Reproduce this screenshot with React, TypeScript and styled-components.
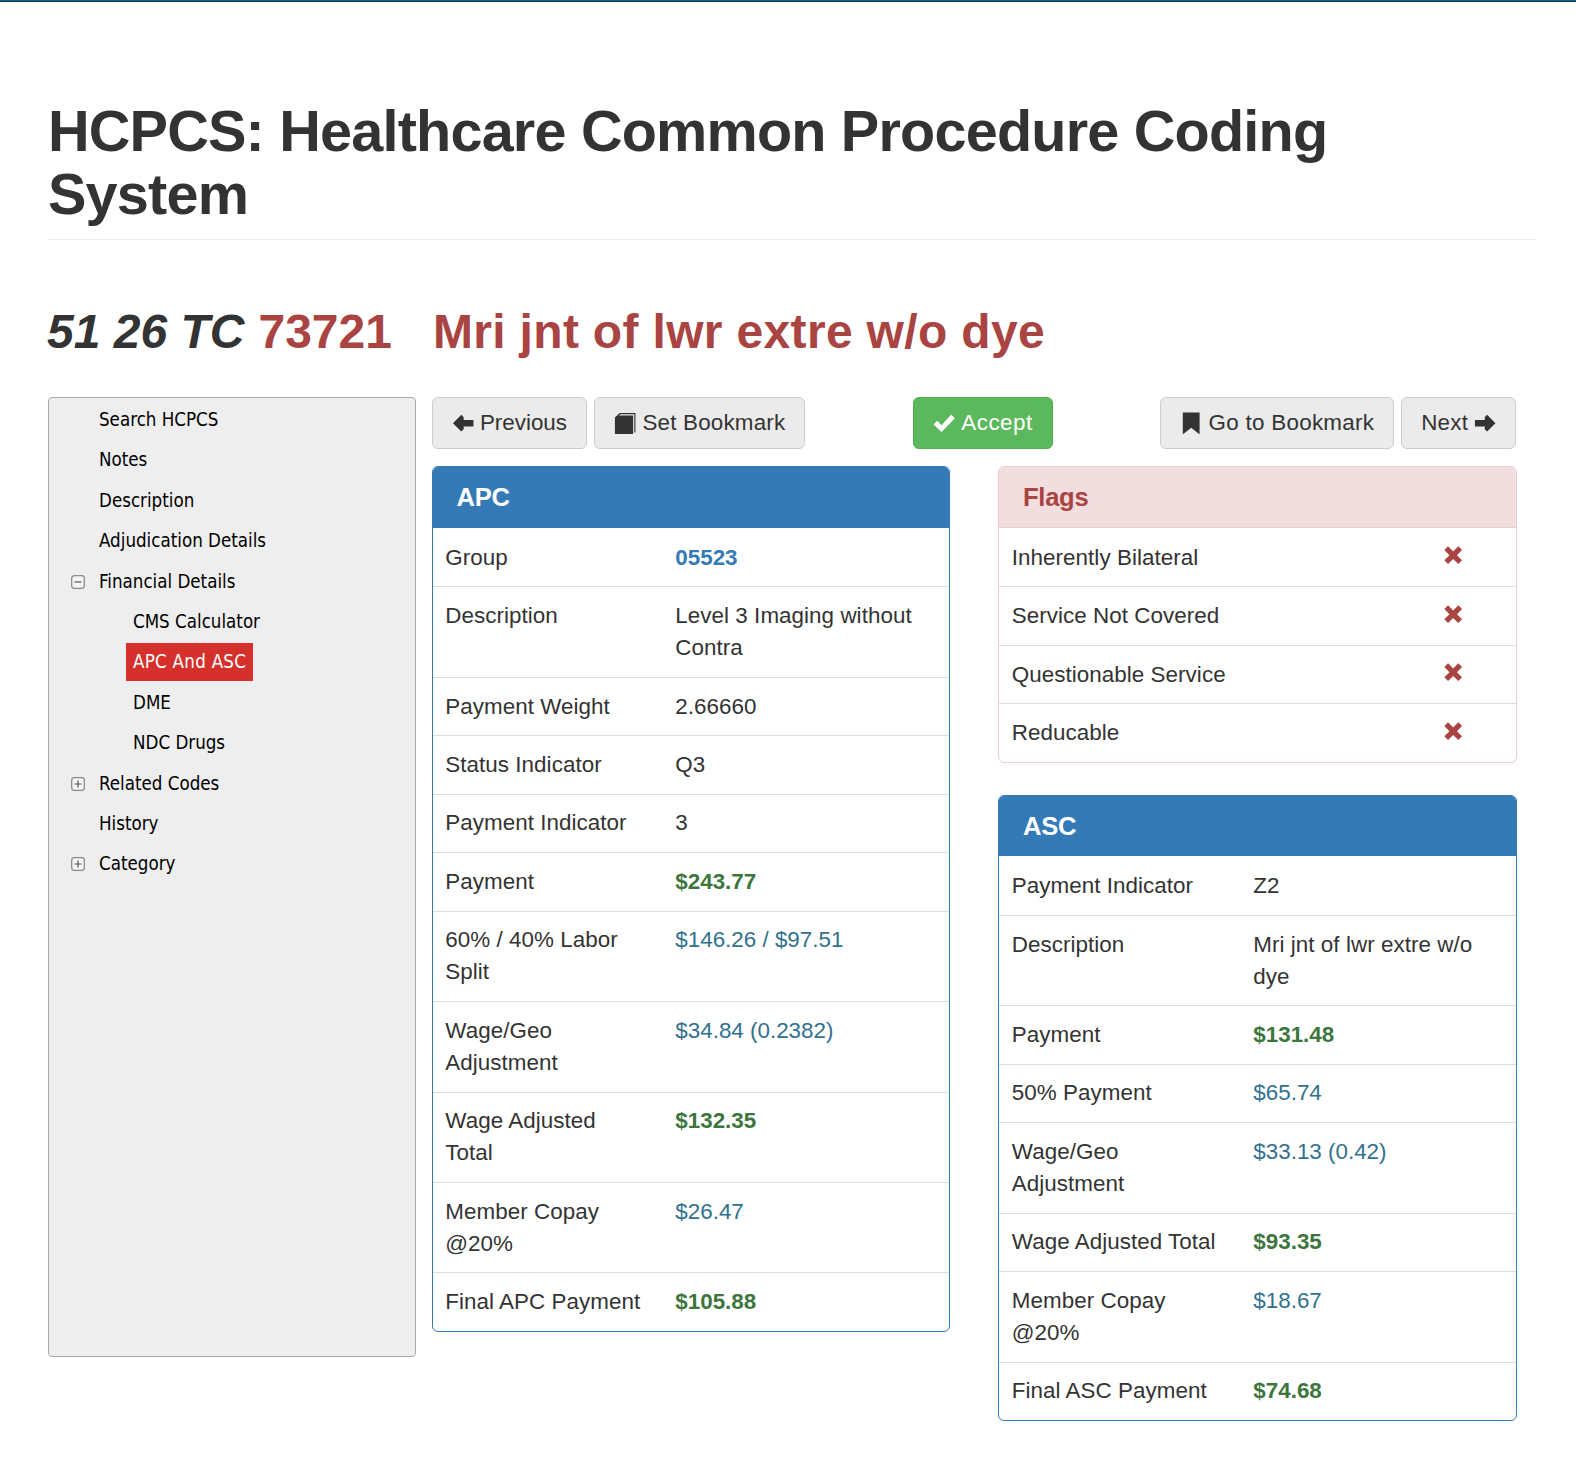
import React from "react";
import styled, { createGlobalStyle } from "styled-components";

const GlobalStyle = createGlobalStyle`
  html, body {
    margin: 0;
    padding: 0;
    background: #fff;
  }
  body {
    font-family: "Liberation Sans", Arial, sans-serif;
    font-size: 22.4px;
    line-height: 32px;
    color: #333;
  }
`;

type Tone = "plain" | "link" | "money" | "info";

type Row = { label: string; value: string; tone?: Tone };

const apcRows: Row[] = [
  { label: "Group", value: "05523", tone: "link" },
  { label: "Description", value: "Level 3 Imaging without Contra" },
  { label: "Payment Weight", value: "2.66660" },
  { label: "Status Indicator", value: "Q3" },
  { label: "Payment Indicator", value: "3" },
  { label: "Payment", value: "$243.77", tone: "money" },
  { label: "60% / 40% Labor Split", value: "$146.26 / $97.51", tone: "info" },
  { label: "Wage/Geo Adjustment", value: "$34.84 (0.2382)", tone: "info" },
  { label: "Wage Adjusted Total", value: "$132.35", tone: "money" },
  { label: "Member Copay @20%", value: "$26.47", tone: "info" },
  { label: "Final APC Payment", value: "$105.88", tone: "money" },
];

const ascRows: Row[] = [
  { label: "Payment Indicator", value: "Z2" },
  { label: "Description", value: "Mri jnt of lwr extre w/o dye" },
  { label: "Payment", value: "$131.48", tone: "money" },
  { label: "50% Payment", value: "$65.74", tone: "info" },
  { label: "Wage/Geo Adjustment", value: "$33.13 (0.42)", tone: "info" },
  { label: "Wage Adjusted Total", value: "$93.35", tone: "money" },
  { label: "Member Copay @20%", value: "$18.67", tone: "info" },
  { label: "Final ASC Payment", value: "$74.68", tone: "money" },
];

const flags = [
  "Inherently Bilateral",
  "Service Not Covered",
  "Questionable Service",
  "Reducable",
];

type TreeItem = {
  label: string;
  depth?: 0 | 1;
  toggle?: "open" | "closed";
  active?: boolean;
};

const tree: TreeItem[] = [
  { label: "Search HCPCS" },
  { label: "Notes" },
  { label: "Description" },
  { label: "Adjudication Details" },
  { label: "Financial Details", toggle: "open" },
  { label: "CMS Calculator", depth: 1 },
  { label: "APC And ASC", depth: 1, active: true },
  { label: "DME", depth: 1 },
  { label: "NDC Drugs", depth: 1 },
  { label: "Related Codes", toggle: "closed" },
  { label: "History" },
  { label: "Category", toggle: "closed" },
];

const TopLine = styled.div`
  height: 2px;
  background: #17607f;
  border-bottom: 1px solid #0d3a50;
  box-sizing: border-box;
`;

const Page = styled.div`
  padding: 98px 40px 40px 48px;
`;

const PageHeader = styled.header`
  border-bottom: 1px solid #eee;
  padding-bottom: 12px;
`;

const Title = styled.h1`
  margin: 0;
  font-size: 57.6px;
  line-height: 63.4px;
  font-weight: 700;
  letter-spacing: -0.8px;
  color: #333;
`;

const CodeLine = styled.h2`
  margin: 65px 0 0;
  font-size: 48px;
  line-height: 53px;
  font-weight: 700;
  color: #a94442;
  display: flex;
`;

const Modifiers = styled.em`
  color: #333;
  font-style: italic;
  margin-left: -1px;
  margin-right: 14px;
`;

const CodeName = styled.span`
  margin-left: 41px;
  letter-spacing: 0.33px;
`;

const Layout = styled.div`
  display: grid;
  grid-template-columns: 367.5px 1085px;
  column-gap: 16px;
  align-items: start;
  margin-top: 39px;
`;

const Sidebar = styled.nav`
  box-sizing: border-box;
  height: 960px;
  background: #eee;
  border: 1px solid #aaa;
  border-radius: 4px;
  padding-top: 2px;
  font-family: "DejaVu Sans", sans-serif;
  font-stretch: condensed;
  font-size: 18.6px;
  color: #000;
`;

const TreeRow = styled.div<{ $depth: number }>`
  height: 40.42px;
  display: flex;
  align-items: center;
  padding-left: ${(p) => (p.$depth === 1 ? 77 : 22)}px;
`;

const TreeToggle = styled.span`
  width: 14px;
  height: 14px;
  flex: none;
  color: #777;
  display: flex;
`;

const TreeSpacer = styled.span<{ $depth: number }>`
  width: 14px;
  flex: none;
  display: ${(p) => (p.$depth === 1 ? "none" : "block")};
`;

const TreeLabel = styled.span<{ $active?: boolean; $depth: number }>`
  margin-left: ${(p) => (p.$depth === 1 ? 0 : 7)}px;
  padding: 0 7px;
  height: 38px;
  line-height: 38px;
  letter-spacing: ${(p) => (p.$active ? 0.27 : 0)}px;
  background: ${(p) => (p.$active ? "#d5302c" : "transparent")};
  color: ${(p) => (p.$active ? "#fff" : "#000")};
`;

const Main = styled.div`
  min-width: 0;
`;

const Toolbar = styled.div`
  display: flex;
  justify-content: space-between;
  align-items: center;
  margin-bottom: 17px;
`;

const ButtonGroup = styled.div`
  display: flex;
  gap: 7px;
`;

const Button = styled.button<{ $primary?: boolean; $tracking: number }>`
  box-sizing: border-box;
  height: 52.5px;
  padding: 0 19px;
  display: flex;
  align-items: center;
  gap: 6px;
  font: inherit;
  letter-spacing: ${(p) => p.$tracking}px;
  color: ${(p) => (p.$primary ? "#fff" : "#333")};
  background: ${(p) => (p.$primary ? "#5cb85c" : "#ebebeb")};
  border: 1px solid ${(p) => (p.$primary ? "#4cae4c" : "#ccc")};
  border-radius: 6px;
`;

const Columns = styled.div`
  display: grid;
  grid-template-columns: 518px 518.5px;
  column-gap: 48.5px;
  align-items: start;
`;

const Stack = styled.div`
  display: flex;
  flex-direction: column;
  gap: 32px;
`;

const Panel = styled.section<{ $danger?: boolean }>`
  border: 1px solid ${(p) => (p.$danger ? "#ebccd1" : "#337ab7")};
  border-radius: 6px;
  overflow: hidden;
  background: #fff;
`;

const PanelHeading = styled.h3<{ $danger?: boolean }>`
  margin: 0;
  box-sizing: border-box;
  height: 60.7px;
  padding: 0 24px;
  font-size: 25.6px;
  line-height: 60px;
  font-weight: 700;
  letter-spacing: -0.3px;
  color: ${(p) => (p.$danger ? "#a94442" : "#fff")};
  background: ${(p) => (p.$danger ? "#f2dede" : "#337ab7")};
  border-bottom: 1px solid ${(p) => (p.$danger ? "#ebccd1" : "#337ab7")};
`;

const TableRow = styled.div<{ $labelWidth: number }>`
  display: grid;
  grid-template-columns: ${(p) => p.$labelWidth}px 1fr;
  border-top: 1px solid #ddd;

  ${PanelHeading} + & {
    border-top: 0;
    padding-top: 1px;
  }
`;

const Cell = styled.div`
  padding: 12.72px 15px 12.72px 12.8px;
  letter-spacing: 0.05px;
`;

const toneColor: Record<Tone, string> = {
  plain: "#333",
  link: "#337ab7",
  money: "#3c763d",
  info: "#31708f",
};

const Value = styled(Cell)<{ $tone: Tone }>`
  color: ${(p) => toneColor[p.$tone]};
  font-weight: ${(p) => (p.$tone === "link" || p.$tone === "money" ? 700 : 400)};
  letter-spacing: ${(p) => (p.$tone === "plain" ? 0.05 : 0)}px;
`;

const FlagIcon = styled.span`
  display: block;
  margin-top: 2px;
  height: 24px;
  color: #a94442;
`;

const Glyph = styled.svg`
  width: 1em;
  height: 1em;
  flex: none;
  fill: currentColor;
`;

const ArrowLeft = () => (
  <Glyph viewBox="0 0 24 24">
    <path d="M1 12 10 3 12.5 5.5V8.5H23V15.5H12.5V18.5L10 21Z" />
  </Glyph>
);

const ArrowRight = () => (
  <Glyph viewBox="0 0 24 24">
    <path d="M23 12 14 3 11.5 5.5V8.5H1V15.5H11.5V18.5L14 21Z" />
  </Glyph>
);

const BookIcon = () => (
  <Glyph viewBox="0 0 24 24">
    <path d="M1 6 6 1H23V22H21.8V2.4H7L5.2 3.8H20.5V24H1Z" />
  </Glyph>
);

const BookmarkIcon = () => (
  <Glyph viewBox="0 0 24 24">
    <path d="M3 0.5H21V24L12 17 3 24Z" />
  </Glyph>
);

const CheckIcon = () => (
  <Glyph viewBox="0 0 24 24">
    <path d="M0.5 13.5 4.5 9.5 9.2 14.2 19.5 2.8 23.5 6.8 9.2 21.5Z" />
  </Glyph>
);

const RemoveIcon = () => (
  <Glyph viewBox="0 0 24 24">
    <path d="M6.5 2.5 12 8 17.5 2.5 21.5 6.5 16 12 21.5 17.5 17.5 21.5 12 16 6.5 21.5 2.5 17.5 8 12 2.5 6.5Z" />
  </Glyph>
);

const ToggleIcon = ({ open }: { open: boolean }) => (
  <svg viewBox="0 0 14 14" width="14" height="14">
    <rect x="0.7" y="0.7" width="12.6" height="12.6" rx="2.5" fill="#f4f4f4" stroke="#8a8a8a" strokeWidth="1.3" />
    <path d={open ? "M3.5 7H10.5" : "M3.5 7H10.5M7 3.5V10.5"} stroke="#555" strokeWidth="1.2" fill="none" />
  </svg>
);

const DataPanel = ({
  title,
  rows,
  labelWidth,
}: {
  title: string;
  rows: Row[];
  labelWidth: number;
}) => (
  <Panel>
    <PanelHeading>{title}</PanelHeading>
    {rows.map((row) => (
      <TableRow key={row.label} $labelWidth={labelWidth}>
        <Cell>{row.label}</Cell>
        <Value $tone={row.tone ?? "plain"}>{row.value}</Value>
      </TableRow>
    ))}
  </Panel>
);

function App() {
  return (
    <>
      <GlobalStyle />
      <TopLine />
      <Page>
        <PageHeader>
          <Title>
            HCPCS: Healthcare Common Procedure Coding
            <br />
            System
          </Title>
        </PageHeader>

        <CodeLine>
          <Modifiers>51 26 TC</Modifiers>
          <span>73721</span>
          <CodeName>Mri jnt of lwr extre w/o dye</CodeName>
        </CodeLine>

        <Layout>
          <Sidebar>
            {tree.map((item) => {
              const depth = item.depth ?? 0;
              return (
                <TreeRow key={item.label} $depth={depth}>
                  {item.toggle ? (
                    <TreeToggle>
                      <ToggleIcon open={item.toggle === "open"} />
                    </TreeToggle>
                  ) : (
                    <TreeSpacer $depth={depth} />
                  )}
                  <TreeLabel $active={item.active} $depth={depth}>
                    {item.label}
                  </TreeLabel>
                </TreeRow>
              );
            })}
          </Sidebar>

          <Main>
            <Toolbar>
              <ButtonGroup>
                <Button $tracking={0}>
                  <ArrowLeft /> Previous
                </Button>
                <Button $tracking={0.2}>
                  <BookIcon /> Set Bookmark
                </Button>
              </ButtonGroup>
              <Button $primary $tracking={0.5}>
                <CheckIcon /> Accept
              </Button>
              <ButtonGroup>
                <Button $tracking={0.28}>
                  <BookmarkIcon /> Go to Bookmark
                </Button>
                <Button $tracking={0.2}>
                  Next <ArrowRight />
                </Button>
              </ButtonGroup>
            </Toolbar>

            <Columns>
              <DataPanel title="APC" rows={apcRows} labelWidth={230} />
              <Stack>
                <Panel $danger>
                  <PanelHeading $danger>Flags</PanelHeading>
                  {flags.map((flag) => (
                    <TableRow key={flag} $labelWidth={430.5}>
                      <Cell>{flag}</Cell>
                      <Cell>
                        <FlagIcon>
                          <RemoveIcon />
                        </FlagIcon>
                      </Cell>
                    </TableRow>
                  ))}
                </Panel>
                <DataPanel title="ASC" rows={ascRows} labelWidth={241.5} />
              </Stack>
            </Columns>
          </Main>
        </Layout>
      </Page>
    </>
  );
}

export default App;
